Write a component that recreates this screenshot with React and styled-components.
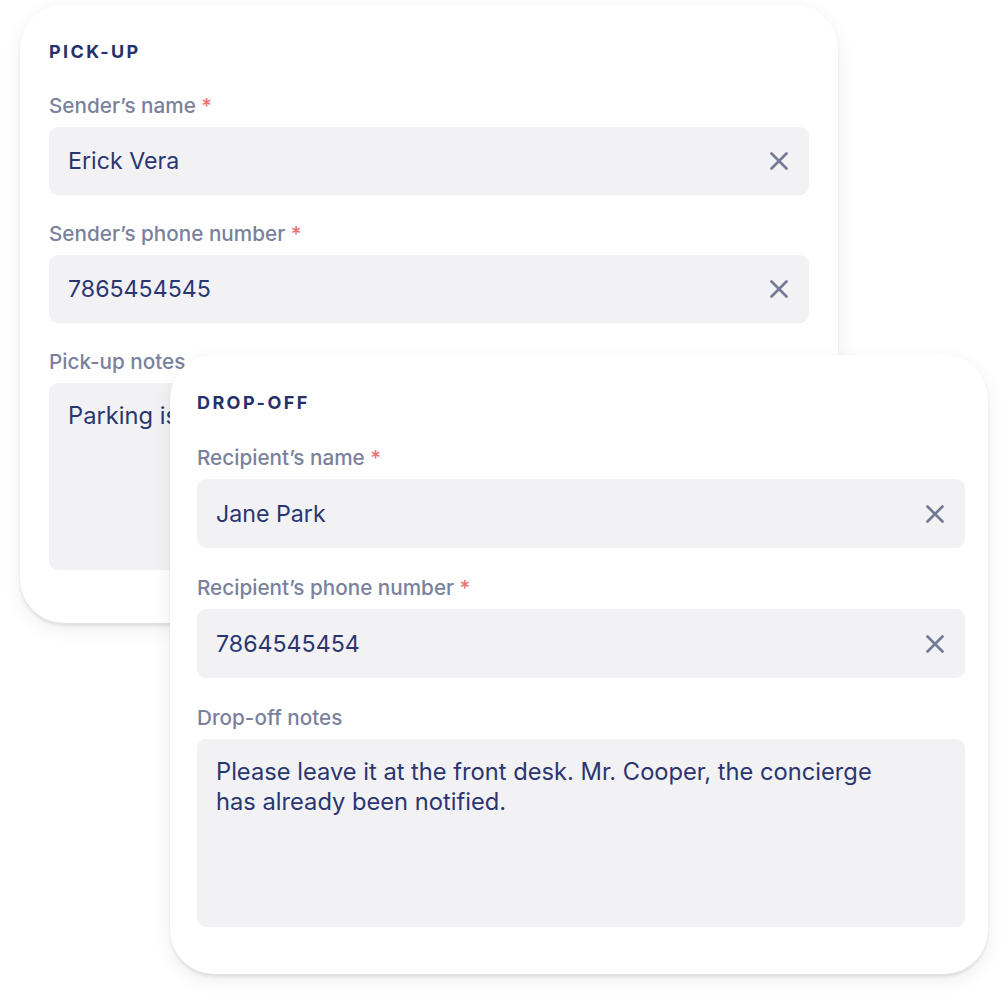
import React from "react";
import styled, { createGlobalStyle } from "styled-components";

const GlobalStyle = createGlobalStyle`
  html, body {
    margin: 0;
    padding: 0;
    background: #ffffff;
    font-family: Inter, "Noto Sans", "Liberation Sans", sans-serif;
  }
`;

function ClearIcon() {
  return (
    <svg width="18" height="18" viewBox="0 0 18 18" fill="none">
      <path d="M1.5 1.5 L16.5 16.5 M16.5 1.5 L1.5 16.5" stroke="#737a96" strokeWidth="2.7" strokeLinecap="round" />
    </svg>
  );
}

function TextField({ label, required, value }) {
  return (
    <Field>
      <Label>
        {label}
        {required && <Star> *</Star>}
      </Label>
      <Input>
        <Value>{value}</Value>
        <ClearIcon />
      </Input>
    </Field>
  );
}

function NotesField({ label, children }) {
  return (
    <Field>
      <Label>{label}</Label>
      <Notes>{children}</Notes>
    </Field>
  );
}

function App() {
  return (
    <React.Fragment>
      <GlobalStyle />
      <Canvas>
        <Card>
          <Title>PICK-UP</Title>
          <TextField label="Sender’s name" required value="Erick Vera" />
          <TextField label="Sender’s phone number" required value="7865454545" />
          <NotesField label="Pick-up notes">
            Parking is available in the back of the building.
          </NotesField>
        </Card>
        <Card $front>
          <Title>DROP-OFF</Title>
          <TextField label="Recipient’s name" required value="Jane Park" />
          <TextField label="Recipient’s phone number" required value="7864545454" />
          <NotesField label="Drop-off notes">
            Please leave it at the front desk. Mr. Cooper, the concierge
            <br />
            has already been notified.
          </NotesField>
        </Card>
      </Canvas>
    </React.Fragment>
  );
}

export default App;

const Canvas = styled.div`
  width: 1006px;
  height: 1007px;
  padding: 5px 0 0 20px;
  box-sizing: border-box;
  overflow: hidden;
`;

// the front card is drawn a hair larger than the back one
const Card = styled.div`
  --input-h: ${(p) => (p.$front ? "69px" : "68px")};
  --notes-h: ${(p) => (p.$front ? "188px" : "187px")};
  position: relative;
  z-index: ${(p) => (p.$front ? 2 : 1)};
  width: 818px;
  height: ${(p) => (p.$front ? "619px" : "618px")};
  box-sizing: border-box;
  margin-top: ${(p) => (p.$front ? "-268px" : "0")};
  margin-left: ${(p) => (p.$front ? "150px" : "0")};
  padding: ${(p) => (p.$front ? "37px 23px 0 27px" : "36px 29px 0")};
  background: #ffffff;
  border-radius: 44px;
  box-shadow: 0 3px 3px rgba(0, 0, 0, 0.08), 0 6px 20px rgba(0, 0, 0, 0.07);
  display: flex;
  flex-direction: column;
  gap: ${(p) => (p.$front ? "28px" : "27px")};
`;

const Title = styled.div`
  font-size: 18px;
  line-height: 22px;
  font-weight: 700;
  letter-spacing: 2.4px;
  color: #25316b;
  margin-bottom: 4px;
`;

const Field = styled.div`
  display: flex;
  flex-direction: column;
  gap: 9px;
`;

const Label = styled.div`
  font-size: 20.7px;
  line-height: 24px;
  font-weight: 500;
  color: #7a819c;
`;

const Star = styled.span`
  color: #e8736f;
`;

const Input = styled.div`
  height: var(--input-h);
  box-sizing: border-box;
  padding: 0 21px 0 19px;
  background: #f2f2f5;
  border-radius: 9px;
  display: flex;
  align-items: center;
  justify-content: space-between;
`;

const Value = styled.span`
  font-size: 23.2px;
  color: #2b3670;
`;

const Notes = styled.div`
  height: var(--notes-h);
  box-sizing: border-box;
  padding: 18px 19px;
  background: #f2f2f5;
  border-radius: 9px;
  font-size: 23.7px;
  line-height: 30px;
  color: #2b3670;
`;
